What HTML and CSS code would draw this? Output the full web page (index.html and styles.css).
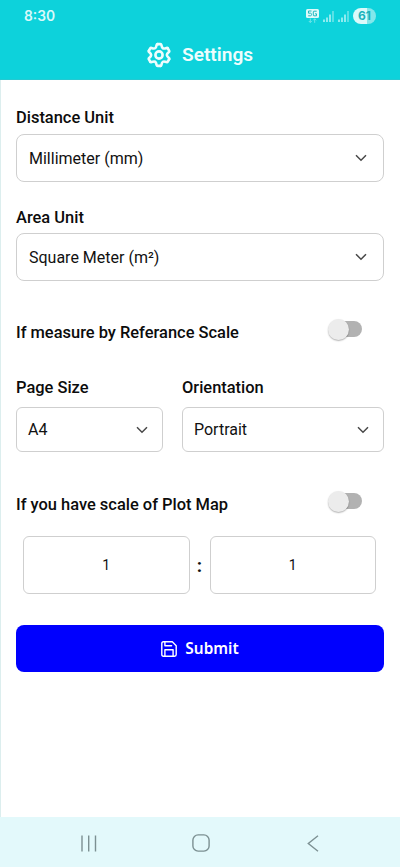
FILE: index.html
```html
<!DOCTYPE html>
<html lang="en">
<head>
<meta charset="utf-8">
<meta name="viewport" content="width=device-width, initial-scale=1">
<title>Settings</title>
<link rel="stylesheet" href="styles.css">
</head>
<body>
<div class="screen">
  <header class="header">
    <div class="status">
      <span class="time">8:30</span>
      <div class="indicators">
        <svg class="network" width="13" height="15" viewBox="0 0 13 15">
          <rect width="13" height="9" rx="1.5" fill="#defafa"/>
          <path d="M5.5 2H2.5V4.2H4.5Q5.5 4.2 5.5 5.5T4.5 6.8H2.2M10.7 2.2H8Q7.3 2.2 7.3 3V6Q7.3 6.8 8 6.8H10.5V4.8H9" fill="none" stroke="#24b9c0"/>
          <path d="M4.3 9.5V13.5M2.8 12L4.3 13.5L5.8 12M8.7 13.8V9.8M7.2 11.3L8.7 9.8L10.2 11.3" fill="none" stroke="#7be7eb" stroke-width=".9"/>
        </svg>
        <svg class="signal" width="11" height="11" viewBox="0 0 11 11"><path d="M1 8.5V11M4 6.5V11M7 3.5V11" stroke="#d5f9fa" stroke-width="1.3"/><path d="M10 0V11" stroke="#8eebee" stroke-width="1.2"/></svg>
        <svg class="signal" width="11" height="11" viewBox="0 0 11 11"><path d="M1 8.5V11M4 6.5V11M7 3.5V11" stroke="#d5f9fa" stroke-width="1.3"/><path d="M10 0V11" stroke="#8eebee" stroke-width="1.2"/></svg>
        <span class="battery">61</span>
      </div>
    </div>
    <div class="title">
      <svg width="24" height="26" viewBox="-12 -13 24 26" fill="none" stroke="#effdfd" stroke-width="2.6" stroke-linecap="round">
        <defs><path id="tooth" d="M-1.3-10.9H1.3Q2.2-10.9 2.4-10C3-6.4 4.1-5.9 7.5-7.1Q8.4-7.4 8.8-6.6"/></defs>
        <use href="#tooth"/><use href="#tooth" transform="rotate(60)"/><use href="#tooth" transform="rotate(120)"/>
        <use href="#tooth" transform="rotate(180)"/><use href="#tooth" transform="rotate(240)"/><use href="#tooth" transform="rotate(300)"/>
        <circle r="3.6"/>
      </svg>
      <h1>Settings</h1>
    </div>
  </header>

  <main class="form">
    <div class="field">
      <label class="label">Distance Unit</label>
      <div class="select"><span>Millimeter (mm)</span><svg class="chevron" viewBox="0 0 12 8"><path d="M1 1.2L6 6.2L11 1.2"/></svg></div>
    </div>
    <div class="field area">
      <label class="label">Area Unit</label>
      <div class="select"><span>Square Meter (m²)</span><svg class="chevron" viewBox="0 0 12 8"><path d="M1 1.2L6 6.2L11 1.2"/></svg></div>
    </div>
    <div class="toggle-row reference">
      <span class="label">If measure by Referance Scale</span>
      <span class="switch"><span class="thumb"></span></span>
    </div>
    <div class="columns">
      <div class="field">
        <label class="label">Page Size</label>
        <div class="select small"><span>A4</span><svg class="chevron" viewBox="0 0 12 8"><path d="M1 1.2L6 6.2L11 1.2"/></svg></div>
      </div>
      <div class="field">
        <label class="label">Orientation</label>
        <div class="select small"><span>Portrait</span><svg class="chevron" viewBox="0 0 12 8"><path d="M1 1.2L6 6.2L11 1.2"/></svg></div>
      </div>
    </div>
    <div class="toggle-row plot">
      <span class="label">If you have scale of Plot Map</span>
      <span class="switch"><span class="thumb"></span></span>
    </div>
    <div class="ratio">
      <div class="number">1</div>
      <span class="colon">:</span>
      <div class="number">1</div>
    </div>
    <button class="submit">
      <svg width="16" height="16" viewBox="0 0 16 16" fill="none" stroke="#fff" stroke-width="1.4" stroke-linejoin="round" stroke-linecap="round"><path d="M2.4.8H11.3L15.2 4.7V13.6Q15.2 15.2 13.6 15.2H2.4Q.8 15.2.8 13.6V2.4Q.8.8 2.4.8ZM3.9 1V4.8H10.6M3.9 15V8.8H12.1V15"/></svg>
      <span>Submit</span>
    </button>
  </main>

  <nav class="navbar">
    <svg width="16" height="17" viewBox="0 0 16 17"><path d="M1 .5V16.5M7.7.5V16.5M14.5.5V16.5"/></svg>
    <svg class="home" width="18" height="18" viewBox="0 0 18 18"><rect x=".9" y=".9" width="16.2" height="16.2" rx="5.2"/></svg>
    <svg width="12" height="17" viewBox="0 0 12 17"><path d="M11 .7L1.3 8.5L11 16.3"/></svg>
  </nav>
</div>
</body>
</html>
```

FILE: styles.css
```css
* { box-sizing: border-box; }

body {
  margin: 0;
  font-family: Roboto, "Liberation Sans", sans-serif;
  font-size: 16px;
  color: #111;
  background: #fff;
}

.screen { display: flex; flex-direction: column; height: 867px; }

.header { height: 80px; background: #0dd2db; border-bottom: 1px solid #25c9d1; }

.status {
  display: flex;
  justify-content: space-between;
  align-items: center;
  height: 32px;
  padding: 0 24px;
}

.time { font: 600 13.8px/18px Inter, sans-serif; color: #d9f9fa; }

.indicators { display: flex; align-items: center; gap: 4px; }
.network { margin: 0; }
.signal { margin-top: 1px; }

.battery {
  width: 23px;
  height: 16px;
  border-radius: 8px;
  background: linear-gradient(90deg, #dbfafa 61%, #83e7eb 61%);
  color: #1cb2ba;
  font: 700 12px/16px Inter, sans-serif;
  text-align: center;
}

.title { display: flex; align-items: center; gap: 11px; height: 45px; padding-left: 147px; }
.title h1 { margin: 0; font-size: 19.1px; line-height: 24px; font-weight: 600; color: #effdfd; }

.form { flex: 1; padding: 28px 16px 0 15px; border-left: 1px solid #dceeee; }

.field { display: flex; flex-direction: column; gap: 6px; }
.label { font-size: 16.45px; font-weight: 500; line-height: 20px; color: #0c0c0c; white-space: nowrap; }
.field.area { margin-top: 26px; gap: 5px; }

.select {
  display: flex;
  align-items: center;
  justify-content: space-between;
  height: 48px;
  padding: 1px 16px 0 12px;
  border: 1px solid #cfcfcf;
  border-radius: 8px;
}

.chevron { width: 12px; height: 8px; margin-bottom: 2px; fill: none; stroke: #484848; stroke-width: 1.5; }

.toggle-row { display: flex; justify-content: space-between; align-items: flex-start; height: 26px; padding-right: 22px; }
.toggle-row .label { margin-top: 5px; }
.reference { margin-top: 37px; }

.switch {
  display: flex;
  align-items: center;
  width: 32px;
  height: 16px;
  margin-top: 3px;
  border-radius: 8px;
  background: #b2b2b2;
}

.thumb {
  flex: none;
  width: 21px;
  height: 21px;
  margin-left: -2px;
  border-radius: 50%;
  background: #ececec;
  box-shadow: 0 1px 1.5px rgba(0, 0, 0, .3);
}

.columns { display: grid; grid-template-columns: 147px 1fr; gap: 19px; margin-top: 34px; }
.columns .field { gap: 9px; }
.select.small { height: 45px; padding: 0 14px 0 11px; border-radius: 6px; }
.small .chevron { margin-bottom: 0; }

.plot { margin-top: 38px; }

.ratio { display: grid; grid-template-columns: 1fr 20px 1fr; margin: 20px 8px 0 7px; }

.number {
  display: flex;
  align-items: center;
  justify-content: center;
  height: 58px;
  border: 1px solid #cfcfcf;
  border-radius: 6px;
  font-size: 14px;
}

.colon { font-size: 19px; font-weight: 700; line-height: 60px; height: 58px; text-align: center; }

.submit {
  display: flex;
  align-items: center;
  justify-content: center;
  gap: 8px;
  width: 100%;
  height: 47px;
  margin-top: 31px;
  padding: 0;
  border: 0;
  border-radius: 8px;
  background: #0000fe;
  color: #fff;
  font: 600 15.4px/20px "Noto Sans", sans-serif;
}

.navbar {
  display: flex;
  align-items: center;
  justify-content: space-between;
  height: 50px;
  padding: 2px 81px 0;
  background: #e3f9fb;
}
.navbar svg { fill: none; stroke: #7c9092; stroke-width: 1.4; }
.navbar .home { margin: 0 1px 0 -1px; }
```
